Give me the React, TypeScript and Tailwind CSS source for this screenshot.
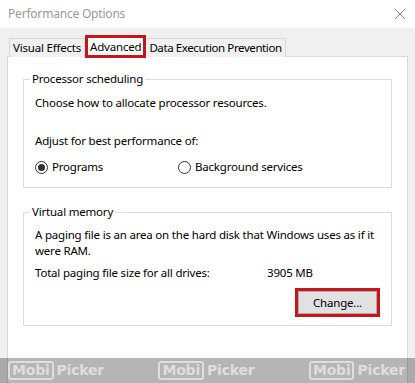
import React from "react";

function Radio({ checked }: { checked?: boolean }) {
  return (
    <span className="w-[13px] h-[13px] rounded-full border border-[#333] bg-white flex items-center justify-center shrink-0">
      {checked && <span className="w-[7px] h-[7px] rounded-full bg-[#333]" />}
    </span>
  );
}

function Watermark() {
  return (
    <div className="flex items-center gap-[3px] text-[#dedede]" style={{ fontFamily: '"DejaVu Sans", sans-serif' }}>
      <span className="border-2 border-[#dedede] rounded-[3px] px-[2px] leading-[15px] text-[14px] font-semibold">Mobi</span>
      <span className="text-[14px] font-semibold leading-[15px]">Picker</span>
    </div>
  );
}

export default function App() {
  return (
    <div
      className="relative w-[415px] h-[383px] bg-[#f0f0f0] overflow-hidden text-[11.5px] tracking-[-0.2px] leading-[16px] text-black"
      style={{ fontFamily: '"Noto Sans", "Open Sans", sans-serif' }}
    >
      {/* Title bar */}
      <div className="h-[28px] bg-white flex items-center justify-between pl-[8px] pr-[8px]">
        <span className="text-[#999999] text-[12px]">Performance Options</span>
        <svg width="12" height="12" viewBox="0 0 12 12" className="mr-[1px]">
          <path d="M1 1 L11 11 M11 1 L1 11" stroke="#8a8a8a" strokeWidth="1" />
        </svg>
      </div>

      {/* Tabs */}
      <div className="flex items-end pl-[9px] mt-[7px] h-[21px] relative z-10">
        <div className="h-[19px] px-[3px] border border-b-0 border-[#d9d9d9] bg-[#f0f0f0] flex items-center mb-[-1px]">
          Visual Effects
        </div>
        <div className="h-[23px] px-[2px] bg-white border-[3px] border-[#c4161c] flex items-center mb-[-2px]">
          Advanced
        </div>
        <div className="h-[19px] px-[3px] border border-b-0 border-l-0 border-[#d9d9d9] bg-[#f0f0f0] flex items-center mb-[-1px] tracking-[-0.4px]">
          Data Execution Prevention
        </div>
      </div>

      {/* Panel */}
      <div className="mx-[7px] bg-white border border-[#d9d9d9] h-[330px] pt-[14px] px-[15px]">
        <fieldset className="border border-[#dcdcdc] pl-[11px] pr-[11px] pb-[12px]">
          <legend className="ml-[-5px] px-[2px] leading-[16px]">Processor scheduling</legend>
          <div className="mt-[8px]">Choose how to allocate processor resources.</div>
          <div className="mt-[22px]">Adjust for best performance of:</div>
          <div className="mt-[10px] flex items-center">
            <div className="w-[143px] flex items-center gap-[4px]">
              <Radio checked />
              <span>Programs</span>
            </div>
            <div className="flex items-center gap-[4px]">
              <Radio />
              <span>Background services</span>
            </div>
          </div>
        </fieldset>

        <fieldset className="mt-[16px] border border-[#dcdcdc] pl-[11px] pr-[11px] pb-[8px]">
          <legend className="ml-[-5px] px-[2px] leading-[16px]">Virtual memory</legend>
          <div className="mt-[7px]">
            A paging file is an area on the hard disk that Windows uses as if it were RAM.
          </div>
          <div className="mt-[6px] flex">
            <span className="w-[232px]">Total paging file size for all drives:</span>
            <span>3905 MB</span>
          </div>
          <div className="mt-[7px] flex justify-end">
            <div className="border-[3px] border-[#c4161c] p-0">
              <button className="w-[79px] h-[23px] bg-[#e1e1e1] border border-[#adadad] flex items-center justify-center">
                Change...
              </button>
            </div>
          </div>
        </fieldset>
      </div>

      {/* Watermark overlay */}
      <div className="absolute left-0 right-0 bottom-0 h-[25px] bg-[rgba(0,0,0,0.29)] flex items-center justify-between pl-[8px] pr-[10px]">
        <Watermark />
        <Watermark />
        <Watermark />
      </div>
    </div>
  );
}
